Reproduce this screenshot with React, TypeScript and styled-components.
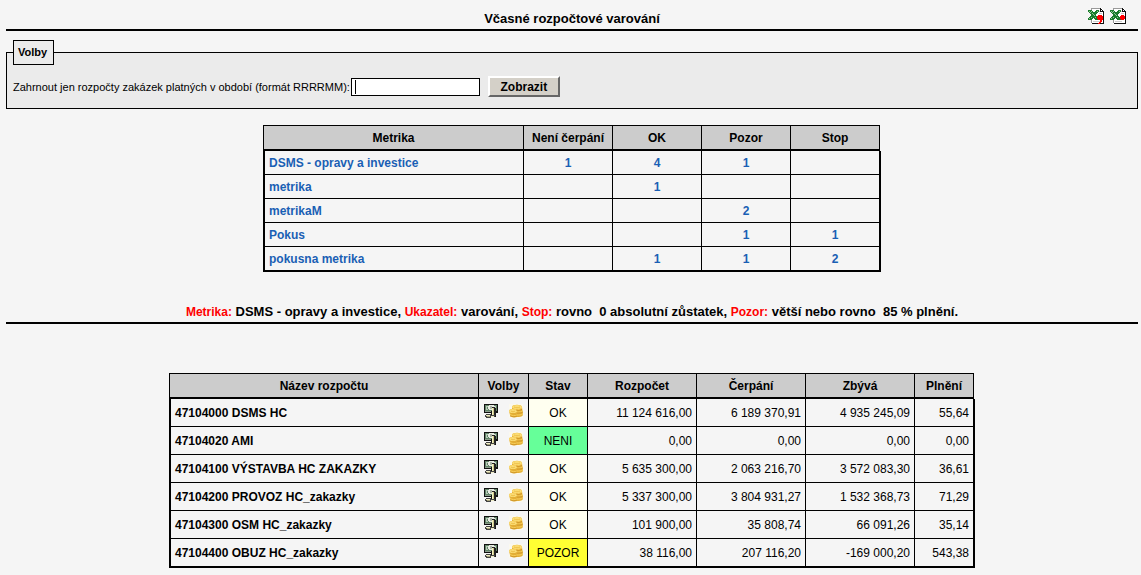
import React from "react";
import styled, { createGlobalStyle } from "styled-components";

const GlobalStyle = createGlobalStyle`
  body {
    margin: 0;
    background: #f5f5f5;
    color: #000;
    font-family: "Liberation Sans", Arial, sans-serif;
    font-size: 12px;
    line-height: 16px;
  }
`;

const Page = styled.main`
  padding: 0 3px 0 6px;
`;

const Header = styled.header`
  display: grid;
  grid-template-columns: 1fr auto 1fr;
  align-items: center;
  height: 21px;
  padding: 8px 12px 0;
  border-bottom: 2px solid #000;
`;

const Title = styled.h1`
  grid-column: 2;
  margin: 0;
  font-size: 13px;
  line-height: 20px;
`;

const Exports = styled.nav`
  display: flex;
  justify-content: flex-end;
  align-self: start;
  gap: 6px;
`;

const IconLink = styled.a`
  display: block;
  width: 16px;
  height: 16px;

  svg {
    display: block;
  }
`;

const Options = styled.fieldset`
  margin: 9px 0 16px;
  padding: 11px 6px;
  border: 1px solid #000;
  background: #ebebeb;
`;

const Legend = styled.legend`
  padding: 4px 6px 4px 4px;
  border: 1px solid #000;
  background: #ebebeb;
  font-size: 11px;
  font-weight: bold;
  line-height: 15px;
`;

const Field = styled.div`
  display: flex;
  align-items: center;
  height: 21px;
  font-size: 11px;
`;

const PeriodInput = styled.input`
  box-sizing: border-box;
  width: 129px;
  height: 18px;
  margin: 0 8px 0 1px;
  padding: 0 4px;
  border: 1px solid #000;
  outline: none;
  background: #fff linear-gradient(#000, #000) 3px 1px / 1px 14px no-repeat;
  font: 11px "Liberation Sans", Arial, sans-serif;
`;

const Button = styled.button`
  width: 72px;
  height: 21px;
  padding: 0;
  border: 2px solid;
  border-color: #fff #666 #666 #fff;
  background: #d4d0c8;
  color: #000;
  font: bold 12px "Liberation Sans", Arial, sans-serif;
`;

const Table = styled.table`
  margin: 0 auto;
  padding-right: 1px;
  border-collapse: separate;
  border-spacing: 0;
  table-layout: fixed;
`;

const Col = styled.col<{ $width: number }>`
  width: ${(p) => p.$width}px;
`;

const HeadCell = styled.th`
  box-sizing: border-box;
  height: 26px;
  padding: 0;
  border: solid #000;
  border-width: 1px 1px 2px 0;
  background: #ccc;

  &:first-child {
    border-left-width: 1px;
  }
`;

const Cell = styled.td<{ $align?: string; $fill?: string; $bold?: boolean }>`
  padding: 0 4px;
  border: solid #000;
  border-width: 0 1px 1px 0;
  background: ${(p) => p.$fill ?? "transparent"};
  font-weight: ${(p) => (p.$bold ? "bold" : "normal")};
  text-align: ${(p) => p.$align ?? "left"};
  white-space: nowrap;

  &:first-child {
    border-left-width: 2px;
  }

  &:last-child {
    box-shadow: 1px 0 0 #000;
  }

  tr:last-child > & {
    border-bottom-width: 2px;
  }
`;

const Row = styled.tr<{ $height: number }>`
  height: ${(p) => p.$height}px;

  &:last-child {
    height: ${(p) => p.$height + 1}px;
  }
`;

const MetricLink = styled.a`
  color: #1a5fb4;
  text-decoration: none;
`;

const Summary = styled.h2`
  margin: 31px 0 49px;
  padding-bottom: 1px;
  border-bottom: 2px solid #000;
  font-size: 13px;
  line-height: 17px;
  text-align: center;
  white-space: pre-wrap;
`;

const Term = styled.span`
  color: #f00;
  font-size: 12px;
`;

const Actions = styled.div`
  display: flex;
  justify-content: center;
  gap: 9px;
  margin-bottom: 3px;
`;

function ExcelIcon({ comma }: { comma?: boolean }) {
  return (
    <svg width="16" height="16" viewBox="0 0 16 16" shapeRendering="crispEdges" aria-hidden="true">
      <path d="M3 0h10l3 3v13H3z" fill="#fff" />
      <path d="M3 0h9v1H4v14H3z" fill="#999" />
      <path d="M5 13h7v1H5zM10 3h2v1h-2zM11 5h3v1h-3z" fill="#ccc" />
      <path d="M12 0h1v1h1v1h1v1h1v13H4v-1h11V4h-3z" fill="#111" />
      <path d="M13 2h1v1h-1z" fill="#fff" />
      <path
        d="M0 2h4v1h1v1h2V3h1V2h3v2h-1v1H9v1H8v2h1v1h1v1h1v2H7v-1H6v-1H5v1H4v1H0v-2h1V9h1V8h1V6H2V5H1V4H0z"
        fill="#1b7d2c"
      />
      <path d="M1 3h1v1H1zM3 3h1v1H3zM2 4h1v1H2zM4 5h1v1H4zM5 6h1v1H5zM6 7h1v1H6zM7 9h1v1H7zM9 3h1v1H9zM3 9h1v1H3zM1 10h1v1H1z" fill="#8fc795" />
      {comma ? (
        <path d="M10 7h4v1h1v4h-1v2h-1v1h-1v1h-2v-1h1v-1h1v-2h-2v-1H9V8h1z" fill="#f00" />
      ) : (
        <path d="M11 7h3v1h1v3h-1v1h-3v-1h-1V8h1z" fill="#f00" />
      )}
    </svg>
  );
}

function MoneyIcon() {
  return (
    <svg width="16" height="16" viewBox="0 0 16 16" shapeRendering="crispEdges" aria-hidden="true">
      <path d="M1 1h14v9h-2v4H8v-4H1z" fill="#111" />
      <path d="M2 2h12v6H2z" fill="#5f8266" />
      <path d="M3 3h2v1H4v2h1v1H3zM12 3h1v4h-1z" fill="#b9c9b9" />
      <path d="M6 2h5v1h1v3h-1v1H6V6H5V3h1z" fill="#e9ece4" />
      <path d="M7 3h2v3H7z" fill="#aab5a6" />
      <path d="M9 4h3v1h1v8H9z" fill="#222" />
      <path d="M9 5h2v8H9z" fill="#d0cc8c" />
      <path d="M9 5h1v7H9z" fill="#f4f1c4" />
      <path d="M2 8h6v1H2z" fill="#8a9c8a" />
      <path d="M3 11h5v1h4v2H8v1H3v-1H2v-2h1z" fill="#444" />
      <path d="M3 12h4v1H3zM8 13h3v1H8z" fill="#efecc4" />
      <path d="M4 13h3v1H4z" fill="#a8a47c" />
    </svg>
  );
}

function CoinsIcon() {
  return (
    <svg width="16" height="16" viewBox="0 0 16 16" aria-hidden="true">
      <path d="M1 1h14v14H1z" fill="#fbf9ee" />
      <path d="M4 4c0-3 10-3 10 0l1 8c-1 2-4 2-6 2-3 1-7 0-7-2L1 8c0-1 1-2 3-2z" fill="#e3ae35" />
      <ellipse cx="9" cy="4" rx="5" ry="2" fill="#fbdc74" />
      <ellipse cx="5" cy="8" rx="4" ry="2" fill="#fbdc74" />
      <path d="M5 6c3 1 7 1 9-1M9 9c2 0 5 0 6-1M9 12c2 0 4 0 6-1M2 11c2 2 5 2 7 1" fill="none" stroke="#f8cf5c" />
      <path d="M8 7c3 1 5 0 6-1M9 10c3 0 4 0 6-1M2 13c2 1 5 1 7 0" fill="none" stroke="#c98d22" strokeOpacity="0.7" />
      <path d="M6 4c2 1 4 1 6 0M3 8c1 1 3 1 4 0" fill="none" stroke="#eec049" />
    </svg>
  );
}

const metricHeads = ["Metrika", "Není čerpání", "OK", "Pozor", "Stop"];
const metricWidths = [261, 89, 89, 89, 89];
const metrics = [
  ["DSMS - opravy a investice", "1", "4", "1", ""],
  ["metrika", "", "1", "", ""],
  ["metrikaM", "", "", "2", ""],
  ["Pokus", "", "", "1", "1"],
  ["pokusna metrika", "", "1", "1", "2"],
];

const budgetHeads = ["Název rozpočtu", "Volby", "Stav", "Rozpočet", "Čerpání", "Zbývá", "Plnění"];
const budgetWidths = [310, 50, 59, 109, 109, 109, 59];
const budgets = [
  { name: "47104000 DSMS HC", state: "OK", values: ["11 124 616,00", "6 189 370,91", "4 935 245,09", "55,64"] },
  { name: "47104020 AMI", state: "NENI", values: ["0,00", "0,00", "0,00", "0,00"] },
  { name: "47104100 VÝSTAVBA HC ZAKAZKY", state: "OK", values: ["5 635 300,00", "2 063 216,70", "3 572 083,30", "36,61"] },
  { name: "47104200 PROVOZ HC_zakazky", state: "OK", values: ["5 337 300,00", "3 804 931,27", "1 532 368,73", "71,29"] },
  { name: "47104300 OSM HC_zakazky", state: "OK", values: ["101 900,00", "35 808,74", "66 091,26", "35,14"] },
  { name: "47104400 OBUZ HC_zakazky", state: "POZOR", values: ["38 116,00", "207 116,20", "-169 000,20", "543,38"] },
];
const stateFill: Record<string, string> = { OK: "#fffff0", NENI: "#66ff99", POZOR: "#ffff33" };

const tableWidth = (widths: number[]) => widths.reduce((a, b) => a + b, 1);

function TableHead({ labels }: { labels: string[] }) {
  return (
    <thead>
      <tr>
        {labels.map((label) => (
          <HeadCell key={label} scope="col">{label}</HeadCell>
        ))}
      </tr>
    </thead>
  );
}

export default function App() {
  return (
    <>
      <GlobalStyle />
      <Page>
        <Header>
          <Title>Včasné rozpočtové varování</Title>
          <Exports>
            <IconLink href="#csv-comma" aria-label="Export s desetinnou čárkou"><ExcelIcon comma /></IconLink>
            <IconLink href="#csv-dot" aria-label="Export s desetinnou tečkou"><ExcelIcon /></IconLink>
          </Exports>
        </Header>
        <Options>
          <Legend>Volby</Legend>
          <Field>
            <label htmlFor="period">Zahrnout jen rozpočty zakázek platných v období (formát RRRRMM):</label>
            <PeriodInput id="period" type="text" maxLength={6} />
            <Button type="button">Zobrazit</Button>
          </Field>
        </Options>
        <Table style={{ width: tableWidth(metricWidths) }}>
          <colgroup>{metricWidths.map((w, i) => <Col key={i} $width={w} />)}</colgroup>
          <TableHead labels={metricHeads} />
          <tbody>
            {metrics.map((row) => (
              <Row key={row[0]} $height={24}>
                {row.map((value, i) => (
                  <Cell key={i} $align={i ? "center" : "left"} $bold>
                    {value && <MetricLink href="#metrika">{value}</MetricLink>}
                  </Cell>
                ))}
              </Row>
            ))}
          </tbody>
        </Table>
        <Summary>
          <Term>Metrika:</Term> DSMS - opravy a investice, <Term>Ukazatel:</Term> varování, <Term>Stop:</Term>
          {" rovno  0 absolutní zůstatek, "}
          <Term>Pozor:</Term>
          {" větší nebo rovno  85 % plnění."}
        </Summary>
        <Table style={{ width: tableWidth(budgetWidths) }}>
          <colgroup>{budgetWidths.map((w, i) => <Col key={i} $width={w} />)}</colgroup>
          <TableHead labels={budgetHeads} />
          <tbody>
            {budgets.map((b) => (
              <Row key={b.name} $height={28}>
                <Cell $bold>{b.name}</Cell>
                <Cell>
                  <Actions>
                    <IconLink href="#rozpocet" aria-label="Rozpočet"><MoneyIcon /></IconLink>
                    <IconLink href="#cerpani" aria-label="Čerpání"><CoinsIcon /></IconLink>
                  </Actions>
                </Cell>
                <Cell $align="center" $fill={stateFill[b.state]}>{b.state}</Cell>
                {b.values.map((value, i) => (
                  <Cell key={i} $align="right">{value}</Cell>
                ))}
              </Row>
            ))}
          </tbody>
        </Table>
      </Page>
    </>
  );
}
